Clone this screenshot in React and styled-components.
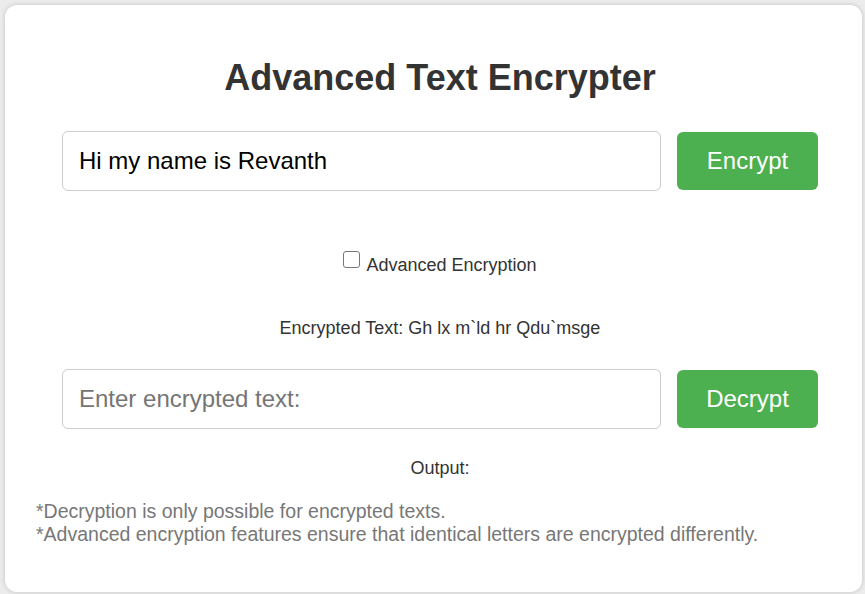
import React, { useState } from "react";
import styled, { createGlobalStyle } from "styled-components";

const GlobalStyle = createGlobalStyle`
  html, body {
    margin: 0;
    padding: 0;
    background: #ececec;
    font-family: "Liberation Sans", Arial, sans-serif;
  }
  #root {
    padding: 5px 3px 2px 5px;
  }
`;

const Card = styled.div`
  display: flow-root;
  box-sizing: border-box;
  height: 587px;
  background: #fff;
  border-radius: 12px;
  box-shadow: 0 0 5px rgba(0, 0, 0, 0.18);
  padding: 0 18px 0 31px;
  color: #333;
`;

const Title = styled.h1`
  margin: 52px 0 0;
  font-size: 36px;
  font-weight: bold;
  text-align: center;
  color: #333;
`;

const FormRow = styled.div`
  display: flex;
  align-items: center;
  justify-content: center;
  gap: 16px;
  margin-top: ${(p) => p.$top}px;
`;

const TextInput = styled.input`
  box-sizing: border-box;
  width: 599px;
  height: 60px;
  padding: 0 16px;
  border: 1px solid #ccc;
  border-radius: 6px;
  font-family: inherit;
  font-size: 24px;
  color: #000;
  outline: none;

  &::placeholder {
    color: #757575;
  }
`;

const ActionButton = styled.button`
  box-sizing: border-box;
  width: 141px;
  height: 58px;
  padding: 0;
  border: none;
  border-radius: 6px;
  background: #4caf50;
  color: #fff;
  font-family: inherit;
  font-size: 24px;
  cursor: pointer;
`;

const CheckLine = styled.label`
  display: block;
  margin-top: 60px;
  text-align: center;
  font-size: 18px;
  color: #333;
`;

const Check = styled.input`
  appearance: none;
  width: 17px;
  height: 17px;
  margin: 0 6px 3px 0;
  border: 1px solid #767676;
  border-radius: 3px;
  background: #fff;
  vertical-align: baseline;
`;

const Info = styled.p`
  margin: ${(p) => p.$top}px 0 0;
  text-align: center;
  font-size: 18px;
  color: #333;
`;

const Notes = styled.div`
  margin-top: 21px;
  font-size: 19.5px;
  line-height: 23px;
  color: #777;
`;

const App = () => {
  const [plain, setPlain] = useState("Hi my name is Revanth");
  const [cipher, setCipher] = useState("");
  return (
    <>
      <GlobalStyle />
      <Card>
        <Title>Advanced Text Encrypter</Title>
        <FormRow $top={32}>
          <TextInput
            value={plain}
            onChange={(e) => setPlain(e.target.value)}
            placeholder="Enter text:"
          />
          <ActionButton type="button">Encrypt</ActionButton>
        </FormRow>
        <CheckLine>
          <Check type="checkbox" />
          Advanced Encryption
        </CheckLine>
        <Info $top={42}>Encrypted Text: Gh lx m`ld hr Qdu`msge</Info>
        <FormRow $top={30}>
          <TextInput
            value={cipher}
            onChange={(e) => setCipher(e.target.value)}
            placeholder="Enter encrypted text:"
          />
          <ActionButton type="button">Decrypt</ActionButton>
        </FormRow>
        <Info $top={29}>Output:</Info>
        <Notes>
          <div>*Decryption is only possible for encrypted texts.</div>
          <div>
            *Advanced encryption features ensure that identical letters are
            encrypted differently.
          </div>
        </Notes>
      </Card>
    </>
  );
};

export default App;
